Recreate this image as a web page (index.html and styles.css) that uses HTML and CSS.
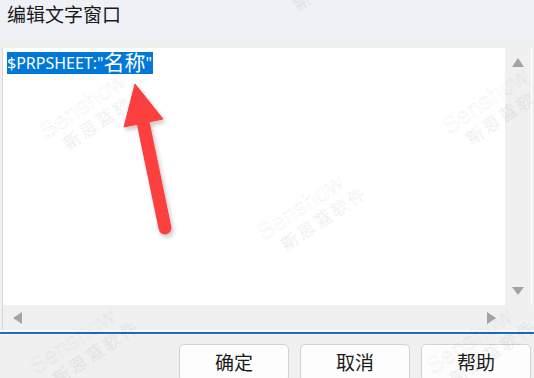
FILE: index.html
```html
<!DOCTYPE html>
<html>
<head>
<link rel="stylesheet" href="styles.css">
</head>
<body>
 <div class="dialog">
   <div class="title-bar">编辑文字窗口</div>
   <div class="title-fade"></div>

   <div class="editor">
     <div class="text-area">
       <span class="selection">$PRPSHEET:"<span class="cjk">名称</span>"</span>
     </div>
     <div class="v-scroll">
       <span class="arrow arrow-up"></span>
       <span class="arrow arrow-down"></span>
     </div>
     <div class="h-scroll">
       <span class="arrow arrow-left"></span>
       <span class="arrow arrow-right"></span>
     </div>
     <div class="corner"></div>
   </div>
   <div class="focus-line"></div>

   <div class="button-row">
     <button class="btn">确定</button>
     <button class="btn">取消</button>
     <button class="btn">帮助</button>
   </div>
 </div>

 <!-- annotation arrow drawn over the screenshot -->
 <svg class="annotation" width="534" height="378" viewBox="0 0 534 378">
   <defs>
     <filter id="shadow" x="-50%" y="-50%" width="200%" height="200%">
       <feDropShadow dx="2" dy="3" stdDeviation="2" flood-color="#000" flood-opacity="0.22"/>
     </filter>
   </defs>
   <g filter="url(#shadow)" fill="#fc3f3f" stroke="#fc3f3f">
     <line x1="143" y1="122" x2="165" y2="228" stroke-width="13" stroke-linecap="round"/>
     <polygon points="135,84 163,119 124,127" stroke-width="1" stroke-linejoin="round"/>
   </g>
 </svg>

 <!-- watermark tiles -->
 <div class="watermarks">
   <div class="mark" style="left:47px; top:142px"><span class="mark-en">Senshow</span><span class="mark-cn">新思蓝软件</span></div>
   <div class="mark" style="left:265px; top:243px"><span class="mark-en">Senshow</span><span class="mark-cn">新思蓝软件</span></div>
   <div class="mark" style="left:450px; top:137px"><span class="mark-en">Senshow</span><span class="mark-cn">新思蓝软件</span></div>
   <div class="mark" style="left:277px; top:3px"><span class="mark-en">Senshow</span><span class="mark-cn">新思蓝软件</span></div>
   <div class="mark" style="left:37px; top:377px"><span class="mark-en">Senshow</span><span class="mark-cn">新思蓝软件</span></div>
   <div class="mark" style="left:434px; top:377px"><span class="mark-en">Senshow</span><span class="mark-cn">新思蓝软件</span></div>
 </div>
</body>
</html>
```

FILE: styles.css
```css
/* Base */
body {
 margin: 0;
 width: 534px;
 height: 378px;
 overflow: hidden;
 position: relative;
 background: #f0f0f0;
 font-family: "Noto Sans CJK SC", "Noto Sans", sans-serif;
 color: #1a1a1a;
}

/* Title */
.title-bar {
 height: 40px;
 background: #eef2f6;
 padding-left: 7px;
 font-size: 19px;
 line-height: 28px;
 box-sizing: border-box;
}

.title-fade {
 height: 8px;
 background: linear-gradient(#eef1f4, #efefef);
}

/* Edit box */
.editor {
 margin-left: 2px;
 width: 530px;
 height: 282px;
 border-left: 1px solid #d6d6d6;
 box-sizing: border-box;
 display: grid;
 grid-template-columns: 1fr 27px;
 grid-template-rows: 257px 25px;
}

.text-area {
 background: #fff;
 padding: 2px 0 0 4px;
}

.selection {
 display: inline-block;
 background: #0078d7;
 color: #fff;
 font-family: "Noto Sans", "Noto Sans CJK SC", sans-serif;
 font-size: 16px;
 line-height: 22px;
 height: 22px;
 padding-right: 1px;
}

.selection .cjk {
 font-family: "Noto Sans CJK SC", sans-serif;
 font-size: 21px;
 vertical-align: top;
 line-height: 22px;
 position: relative;
 top: -2px;
}

.v-scroll {
 background: #f0f0f0;
 border-right: 1px solid #fff;
 display: flex;
 flex-direction: column;
 justify-content: space-between;
 align-items: center;
 padding: 10px 0 10px;
}

.h-scroll {
 background: #f0f0f0;
 display: flex;
 justify-content: space-between;
 align-items: center;
 padding: 0 9px 0 10px;
}

.corner { background: #f0f0f0; }

.arrow {
 width: 0;
 height: 0;
 border: 0 solid transparent;
}
.arrow-up { border-width: 0 6px 9px; border-bottom-color: #a3a3a3; }
.arrow-down { border-width: 8px 6px 0; border-top-color: #a3a3a3; }
.arrow-left { border-width: 6px 9px 6px 0; border-right-color: #a3a3a3; }
.arrow-right { border-width: 6px 0 6px 9px; border-left-color: #a3a3a3; }

.focus-line {
 height: 2px;
 border-top: 2px solid #fafafa;
 background: #1b6ac4;
 border-bottom: 1px solid #fafafa;
}

/* Buttons */
.button-row {
 display: flex;
 justify-content: flex-end;
 gap: 11px;
 padding: 9px 3px 0 0;
}

.btn {
 width: 110px;
 height: 38px;
 background: #fdfdfd;
 border: 1px solid #d2d2d2;
 border-radius: 5px;
 font-family: "Noto Sans CJK SC", sans-serif;
 font-size: 19px;
 color: #1a1a1a;
 padding: 0 0 2px;
 line-height: 32px;
 text-align: center;
 box-sizing: border-box;
}

/* Overlays */
.annotation {
 position: absolute;
 top: 0;
 left: 0;
 pointer-events: none;
}

.watermarks {
 position: absolute;
 inset: 0;
 pointer-events: none;
}

.mark {
 position: absolute;
 transform-origin: 0 0;
 transform: rotate(-34deg) translateY(-22px);
 white-space: nowrap;
}

.mark-en {
 display: block;
 font-family: "Liberation Sans", sans-serif;
 font-size: 24px;
 line-height: 24px;
 color: transparent;
 -webkit-text-stroke: 0.4px rgba(0, 0, 0, 0.14);
}

.mark-cn {
 display: block;
 font-family: "Noto Sans CJK SC", sans-serif;
 font-size: 17px;
 line-height: 20px;
 letter-spacing: 3px;
 padding-left: 13px;
 color: transparent;
 -webkit-text-stroke: 0.4px rgba(0, 0, 0, 0.14);
}
```
